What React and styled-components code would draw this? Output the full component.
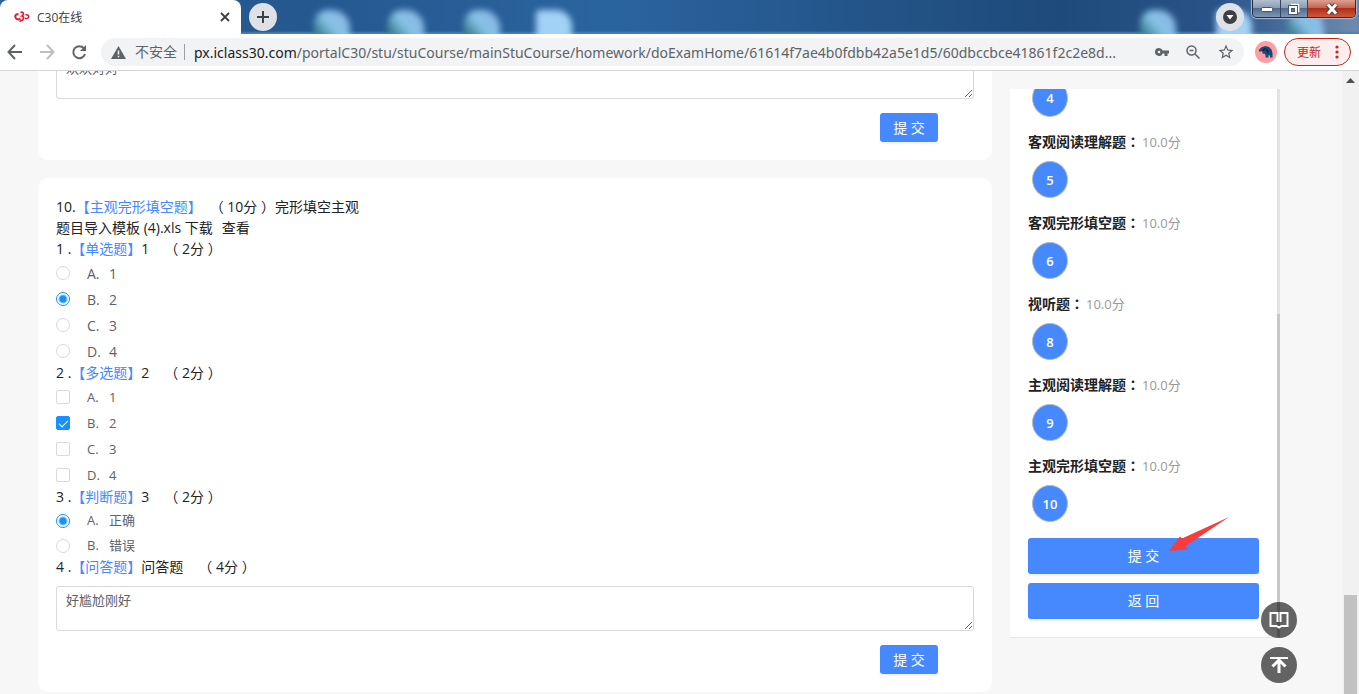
import React, { useState } from 'react';
import styled, { createGlobalStyle, css } from 'styled-components';

const sections = [
  { number: 4 },
  { title: '客观阅读理解题', score: '10.0分', number: 5 },
  { title: '客观完形填空题', score: '10.0分', number: 6 },
  { title: '视听题', score: '10.0分', number: 8 },
  { title: '主观阅读理解题', score: '10.0分', number: 9 },
  { title: '主观完形填空题', score: '10.0分', number: 10 },
];

const numberOptions = [
  { letter: 'A', text: '1' },
  { letter: 'B', text: '2' },
  { letter: 'C', text: '3' },
  { letter: 'D', text: '4' },
];

const judgeOptions = [
  { letter: 'A', text: '正确' },
  { letter: 'B', text: '错误' },
];

function WindowControls() {
  return (
    <Controls>
      <ControlButton type='button' $width={28} aria-label='Minimize'>
        <svg width='14' height='8' viewBox='0 0 14 8'>
          <rect x='1.5' y='2.5' width='11' height='4' rx='1' fill='#fff' stroke='#4a5670' />
        </svg>
      </ControlButton>
      <ControlButton type='button' $width={27} aria-label='Restore'>
        <svg width='14' height='14' viewBox='0 0 14 14' fill='none'>
          <path d='M5 3.5h6v6H9' stroke='#4a5670' strokeWidth='4' />
          <path d='M5 3.5V2.5h6.500v7H9.500' stroke='#fff' strokeWidth='2' />
          <rect x='3' y='5' width='6' height='6' stroke='#4a5670' strokeWidth='4' />
          <rect x='3' y='5' width='6' height='6' stroke='#fff' strokeWidth='2' />
        </svg>
      </ControlButton>
      <ControlButton type='button' $width={47} $close aria-label='Close'>
        <svg width='14' height='12' viewBox='0 0 14 12' fill='none'>
          <path d='M3 1.500L11 10.500M11 1.500L3 10.500' stroke='#5b3440' strokeWidth='5' />
          <path d='M3 1.500L11 10.500M11 1.500L3 10.500' stroke='#fff' strokeWidth='3' />
        </svg>
      </ControlButton>
    </Controls>
  );
}

function TabStrip() {
  return (
    <Strip>
      <Glow $left={314} />
      <Glow $left={388} />
      <Glow $left={464} />
      <Glow $left={536} $square />
      <Glow $left={1140} />
      <Glow $left={1216} $square />
      <Glow $left={1288} />
      <Tab>
        <svg width='16' height='12' viewBox='0 0 16 12' fill='none' stroke='#e8192f' strokeWidth='2'>
          <path d='M4.500 3.500C2 2.500 .8 4.500 1.500 6.500C2.200 8.500 5 9 6.500 7.500' />
          <path d='M6.500 1.500C9.500 0 10.500 3.500 8 5C11 5.500 9.500 10.500 5.500 10' strokeWidth='1.700' />
          <path d='M11.500 4C14.500 3 15.500 5.500 14 7C13 8 11.500 7.500 11 7' strokeWidth='1.500' />
        </svg>
        <TabTitle>C30在线</TabTitle>
        <PlainButton type='button' aria-label='Close tab'>
          <svg width='10' height='10' viewBox='0 0 10 10' stroke='#3c4043' strokeWidth='1.800'>
            <path d='M1 1L9 9M9 1L1 9' />
          </svg>
        </PlainButton>
      </Tab>
      <RoundButton type='button' aria-label='New tab'>
        <svg width='14' height='14' viewBox='0 0 14 14' stroke='#3c4043' strokeWidth='2'>
          <path d='M7 1V13M1 7H13' />
        </svg>
      </RoundButton>
      <StripEnd>
        <RoundButton type='button' aria-label='Search tabs'>
          <svg width='14' height='14' viewBox='0 0 14 14'>
            <circle cx='7' cy='7' r='7' fill='#3c4043' />
            <path d='M3.500 5H10.500L7 9.500Z' fill='#fff' />
          </svg>
        </RoundButton>
        <WindowControls />
      </StripEnd>
    </Strip>
  );
}

function Toolbar() {
  return (
    <Bar>
      <PlainButton type='button' aria-label='Back'>
        <svg width='16' height='16' viewBox='0 0 16 16' fill='none' stroke='#5f6368' strokeWidth='2'>
          <path d='M15 8H2M8 1L1.500 8L8 15' />
        </svg>
      </PlainButton>
      <PlainButton type='button' aria-label='Forward'>
        <svg width='16' height='16' viewBox='0 0 16 16' fill='none' stroke='#bcbec1' strokeWidth='2'>
          <path d='M1 8H14M8 1L14.500 8L8 15' />
        </svg>
      </PlainButton>
      <PlainButton type='button' aria-label='Reload'>
        <svg width='16' height='16' viewBox='0 0 16 16'>
          <path d='M12.800 4.200A6 6 0 1 0 14 10' fill='none' stroke='#5f6368' strokeWidth='2' />
          <path d='M15 1V7H9Z' fill='#5f6368' />
        </svg>
      </PlainButton>
      <AddressBar>
        <svg width='15' height='13' viewBox='0 0 15 13'>
          <path d='M7.500 0L15 13H0Z' fill='#5f6368' />
          <path d='M7.500 4.500V8.500M7.500 9.700V11.300' stroke='#f1f3f4' strokeWidth='1.500' />
        </svg>
        <Insecure>不安全</Insecure>
        <Url>
          <b>px.iclass30.com</b>/portalC30/stu/stuCourse/mainStuCourse/homework/doExamHome/61614f7ae4b0fdbb42a5e1d5/60dbccbce41861f2c2e8d...
        </Url>
        <AddressIcons>
          <PlainButton type='button' aria-label='Passwords'>
            <svg width='14' height='10' viewBox='0 0 14 10' fill='#5f6368'>
              <path fillRule='evenodd' d='M4 1A4 4 0 1 0 7.700 6.500H9.500V9H12.500V6.500H14V3.500H7.700A4 4 0 0 0 4 1ZM4 3.700A1.300 1.300 0 1 1 4 6.300A1.300 1.300 0 0 1 4 3.700Z' />
            </svg>
          </PlainButton>
          <PlainButton type='button' aria-label='Zoom'>
            <svg width='14' height='14' viewBox='0 0 14 14' fill='none' stroke='#5f6368' strokeWidth='1.500'>
              <circle cx='5.500' cy='5.500' r='4.500' />
              <path d='M9 9L13.500 13.500M3.500 5.500H7.500' />
            </svg>
          </PlainButton>
          <PlainButton type='button' aria-label='Bookmark'>
            <svg width='18' height='18' viewBox='0 0 24 24' fill='#5f6368'>
              <path d='M22 9.240l-7.190-.62L12 2 9.190 8.630 2 9.240l5.460 4.730L5.820 21 12 17.270 18.180 21l-1.630-7.030L22 9.240zM12 15.400l-3.760 2.270 1-4.280-3.320-2.880 4.380-.38L12 6.100l1.710 4.040 4.380.38-3.320 2.880 1 4.280L12 15.400z' />
            </svg>
          </PlainButton>
        </AddressIcons>
      </AddressBar>
      <Avatar type='button' aria-label='Profile'>
        <svg width='14' height='14' viewBox='0 0 14 14'>
          <path d='M0 4.500L3 2L6.500 1L10 2L12.500 4.500L13.500 8V12.500H11V10.500L9.500 10V12.500H6.500V9.500L5 8.500L3.500 9V6.500L0 6.500Z' fill='#154a78' />
          <path d='M3.500 5.500L6.500 3.500M7.500 4.500L9 7.500' stroke='#0c1f38' strokeWidth='1.500' />
        </svg>
      </Avatar>
      <UpdateButton type='button'>
        更新
        <svg width='4' height='14' viewBox='0 0 4 14' fill='#d0211c'>
          <circle cx='2' cy='2' r='1.600' />
          <circle cx='2' cy='7' r='1.600' />
          <circle cx='2' cy='12' r='1.600' />
        </svg>
      </UpdateButton>
    </Bar>
  );
}

function Choices({ type, name, options, defaultLetters, small, dense }) {
  const [selected, setSelected] = useState(defaultLetters);

  const toggle = (letter) => {
    if (type === 'radio') {
      setSelected([letter]);
    } else {
      setSelected(selected.includes(letter) ? selected.filter((l) => l !== letter) : [...selected, letter]);
    }
  };

  return (
    <OptionList>
      {options.map(({ letter, text }) => (
        <Option key={letter} $small={small} $dense={dense}>
          <ChoiceInput
            type={type}
            name={name}
            value={letter}
            checked={selected.includes(letter)}
            onChange={() => toggle(letter)}
          />
          <Letter>{letter}.</Letter>
          {text}
        </Option>
      ))}
    </OptionList>
  );
}

function SubQuestion({ number, type, text, score }) {
  return (
    <Line>
      {number} .<Kind>【{type}】</Kind>
      {text}
      <Score>（ {score} ）</Score>
    </Line>
  );
}

function Sidebar() {
  return (
    <Side>
      <SideContent>
        {sections.map(({ title, score, number }) => (
          <Section key={number}>
            {title && (
              <SectionTitle>
                {title}
                <Colon>：</Colon>
                <small>{score}</small>
              </SectionTitle>
            )}
            <NumberButton type='button'>{number}</NumberButton>
          </Section>
        ))}
        <Actions>
          <WideButton type='button'>
            提 交
            <Arrow width='62' height='36' viewBox='0 0 62 36'>
              <path d='M1 34L12 19.500L14 21.500L61 0L17 29.500L20 32.500Z' fill='#fb3a3a' />
            </Arrow>
          </WideButton>
          <WideButton type='button'>返 回</WideButton>
        </Actions>
      </SideContent>
      <SideTrack>
        <SideThumb />
      </SideTrack>
    </Side>
  );
}

export default function App() {
  return (
    <Window>
      <GlobalStyle />
      <TabStrip />
      <Toolbar />
      <Page>
        <Content>
          <Questions>
            <Card>
              <Answer aria-label='第9题答案' defaultValue='欢欢对对' />
              <SubmitButton type='button'>提 交</SubmitButton>
            </Card>
            <Card>
              <Line>
                10.<Kind>【主观完形填空题】</Kind>
                <Score>（ 10分 ）</Score>完形填空主观
              </Line>
              <Line>
                题目导入模板 (4).xls <a href='#download'>下载</a>
                <ViewLink href='#view'>查看</ViewLink>
              </Line>
              <SubQuestion number={1} type='单选题' text='1' score='2分' />
              <Choices type='radio' name='single' options={numberOptions} defaultLetters={['B']} />
              <SubQuestion number={2} type='多选题' text='2' score='2分' />
              <Choices type='checkbox' name='multiple' options={numberOptions} defaultLetters={['B']} small />
              <SubQuestion number={3} type='判断题' text='3' score='2分' />
              <Choices type='radio' name='judge' options={judgeOptions} defaultLetters={['A']} small dense />
              <SubQuestion number={4} type='问答题' text='问答题' score='4分' />
              <Answer aria-label='问答题' defaultValue='好尴尬刚好' />
              <SubmitButton type='button'>提 交</SubmitButton>
            </Card>
          </Questions>
          <Sidebar />
        </Content>
        <ScrollTrack>
          <svg width='9' height='5' viewBox='0 0 9 5'>
            <path d='M4.500 0L9 5H0Z' fill='#505050' />
          </svg>
          <ScrollThumb />
        </ScrollTrack>
        <FloatingTools>
          <FloatingButton type='button' aria-label='Guide'>
            <svg width='20' height='18' viewBox='0 0 20 18' fill='none' stroke='#fff' strokeWidth='2'>
              <path d='M8.500 11V2H1.500V15H7.500L10 16.500L12.500 15H18.500V2H11.500V11' />
            </svg>
          </FloatingButton>
          <FloatingButton type='button' aria-label='Back to top'>
            <svg width='18' height='18' viewBox='0 0 18 18' fill='none' stroke='#fff'>
              <path d='M0 2H18' strokeWidth='2' />
              <path d='M9 3V17M2.500 10.500L9 4L15.500 10.500' strokeWidth='3' />
            </svg>
          </FloatingButton>
        </FloatingTools>
      </Page>
    </Window>
  );
}

const GlobalStyle = createGlobalStyle`
  * {
    box-sizing: border-box;
  }

  body {
    margin: 0;
    color: #222;
    font-family: 'Open Sans', 'Noto Sans CJK SC', sans-serif;
    font-size: 14px;
    line-height: 21px;
  }

  button,
  textarea {
    font-family: inherit;
  }

  svg {
    display: block;
    flex: none;
  }
`;

const Window = styled.div`
  display: flex;
  flex-direction: column;
  height: 100vh;
  overflow: hidden;
`;

/* browser frame */

const Strip = styled.div`
  position: relative;
  display: flex;
  flex: none;
  align-items: flex-start;
  height: 34px;
  overflow: hidden;
  background: linear-gradient(90deg, #2b5c98 0%, #25588f 22%, #2a649f 45%, #235387 65%, #1e4a7b 78%, #2a5489 90%, #6f8bae 100%);
  box-shadow: inset 0 -2px 2px #4f7fb4;
`;

const Glow = styled.span`
  position: absolute;
  top: 10px;
  left: ${(props) => props.$left}px;
  width: 36px;
  height: 34px;
  border-radius: ${(props) => (props.$square ? '4px 16px 0 0' : '14px 18px 0 0')};
  background: ${(props) =>
    props.$square ? '#a2d2f6' : 'linear-gradient(50deg, #3f8294 20%, #86c2e6 50%, #8fb4e6 100%)'};
  filter: blur(3px);
`;

const PlainButton = styled.button`
  display: flex;
  padding: 0;
  border: none;
  background: none;
`;

const Tab = styled.div`
  position: relative;
  display: flex;
  align-items: center;
  width: 241px;
  height: 34px;
  padding: 0 11px 0 14px;
  border-radius: 8px 8px 0 0;
  background: #fff;
`;

const TabTitle = styled.span`
  flex: 1;
  margin-left: 7px;
  color: #3c4043;
  font-size: 12px;
`;

const RoundButton = styled.button`
  position: relative;
  display: flex;
  align-items: center;
  justify-content: center;
  width: 28px;
  height: 28px;
  margin: 3px 8px;
  padding: 0;
  border: none;
  border-radius: 50%;
  background: #dee1e6;
`;

const StripEnd = styled.div`
  display: flex;
  margin-left: auto;
  padding-right: 3px;
`;

const Controls = styled.div`
  position: relative;
  display: flex;
  height: 18px;
  overflow: hidden;
  border: 1px solid #1f2f4c;
  border-top: none;
  border-radius: 0 0 5px 5px;
  box-shadow: 0 0 1px 1px #a9bdd6;
`;

const ControlButton = styled.button`
  display: flex;
  align-items: center;
  justify-content: center;
  width: ${(props) => props.$width}px;
  padding: 0;
  border: none;
  border-right: ${(props) => (props.$close ? 'none' : '1px solid #34435f')};
  background: linear-gradient(#b3bfd0 0%, #8b9db6 45%, #536b8f 50%, #7f96b6 100%);

  ${(props) =>
    props.$close &&
    css`
      background: linear-gradient(#dda08f 0%, #c8634f 45%, #ae2f17 50%, #d1583a 100%);
    `}
`;

const Bar = styled.div`
  display: flex;
  flex: none;
  align-items: center;
  gap: 16px;
  height: 37px;
  padding: 0 8px 0 7px;
  border-bottom: 1px solid #d5d6da;
  background: #fff;
`;

const AddressBar = styled.div`
  display: flex;
  flex: 1;
  align-items: center;
  min-width: 0;
  height: 28px;
  margin-left: -2px;
  padding: 0 9px 0 10px;
  border-radius: 14px;
  background: #f1f3f4;
  color: #5f6368;
`;

const Insecure = styled.span`
  flex: none;
  margin-left: 9px;
  padding-right: 7px;
  border-right: 1px solid #9aa0a6;
  line-height: 16px;
`;

const Url = styled.span`
  flex: 1;
  min-width: 0;
  margin-left: 9px;
  overflow: hidden;
  font-family: 'Noto Sans', sans-serif;
  font-size: 14px;
  text-overflow: ellipsis;
  white-space: nowrap;

  b {
    color: #202124;
    font-weight: 400;
  }
`;

const AddressIcons = styled.div`
  display: flex;
  align-items: center;
  gap: 17px;
  margin-left: 12px;
`;

const Avatar = styled.button`
  display: flex;
  align-items: center;
  justify-content: center;
  width: 22px;
  height: 22px;
  margin: 0 -9px 0 -5px;
  padding: 0;
  border: none;
  border-radius: 50%;
  background: #fd9da3;
`;

const UpdateButton = styled.button`
  display: flex;
  align-items: center;
  justify-content: space-between;
  width: 67px;
  height: 28px;
  padding: 0 11px 0 12px;
  border: 1px solid #c5221f;
  border-radius: 14px;
  background: #fceeed;
  color: #c5221f;
  font-size: 12px;
`;

/* exam page */

const Page = styled.div`
  position: relative;
  display: flex;
  flex: 1;
  min-height: 0;
  background: #f7f7f7;
`;

const Content = styled.main`
  display: flex;
  flex: 1;
  gap: 18px;
  min-width: 0;
  padding: 0 62px 0 38px;
`;

const Questions = styled.div`
  display: flex;
  flex: 1;
  flex-direction: column;
  justify-content: flex-end;
  gap: 18px;
  min-width: 0;
  padding-bottom: 2px;
  overflow: hidden;
`;

const Card = styled.section`
  display: flex;
  flex: none;
  flex-direction: column;
  padding: 18px;
  border-radius: 10px;
  background: #fff;
`;

const Line = styled.div`
  white-space: pre-wrap;

  a {
    color: inherit;
    text-decoration: none;
  }
`;

const Kind = styled.span`
  color: #4689ff;
`;

const Score = styled.span`
  margin-left: 15px;
`;

const ViewLink = styled.a`
  margin-left: 9px;
`;

const OptionList = styled.div`
  display: flex;
  flex-direction: column;
  gap: 4px;
  padding-top: 3px;
`;

const Option = styled.label`
  display: flex;
  align-items: center;
  height: ${(props) => (props.$dense ? 21 : 22)}px;
  color: #606266;
  font-size: ${(props) => (props.$small ? 13 : 14)}px;
`;

const Letter = styled.span`
  width: 22px;
  margin-left: 17px;
`;

const ChoiceInput = styled.input`
  appearance: none;
  width: 14px;
  height: 14px;
  margin: 0;
  border: 1px solid #d9d9d9;
  border-radius: ${(props) => (props.type === 'radio' ? '50%' : '2px')};
  background: #fff;

  &:checked {
    border-color: #1890ff;
  }

  &[type='radio']:checked {
    background: radial-gradient(circle, #1890ff 3px, #fff 5px);
  }

  &[type='checkbox']:checked {
    display: flex;
    justify-content: center;
    background: #1890ff;
  }

  &[type='checkbox']:checked::after {
    width: 4px;
    height: 8px;
    margin-top: 1px;
    border: solid #fff;
    border-width: 0 1px 1px 0;
    content: '';
    transform: rotate(45deg);
  }
`;

const Answer = styled.textarea`
  height: 45px;
  margin: 9px 0 0;
  padding: 3px 9px;
  border: 1px solid #d9d9d9;
  border-radius: 3px;
  color: #606266;
  font-size: 13px;
  line-height: 20px;
  resize: vertical;
`;

const BlueButton = styled.button`
  padding: 0 0 2px;
  border: none;
  border-radius: 3px;
  background: #4689ff;
  box-shadow: 0 2px 2px rgba(0, 0, 0, 0.06);
  color: #fff;
  font-size: 14px;
`;

const SubmitButton = styled(BlueButton)`
  align-self: flex-end;
  width: 58px;
  height: 29px;
  margin: 14px 36px 0 0;
`;

const Side = styled.aside`
  display: flex;
  flex: none;
  width: 270px;
  margin: 18px 0 56px;
  border-bottom: 1px solid #e6e8ee;
  background: #fff;
`;

const SideContent = styled.div`
  display: flex;
  flex: 1;
  flex-direction: column;
  justify-content: flex-end;
  padding: 0 18px;
  overflow: hidden;
`;

const Section = styled.section`
  display: flex;
  flex: none;
  flex-direction: column;
  align-items: flex-start;
  justify-content: flex-end;
  height: 81px;
  padding-bottom: 14px;
`;

const SectionTitle = styled.h3`
  margin: 0;
  font-size: 14px;
  font-weight: 700;

  small {
    margin-left: 2px;
    color: #999;
    font-size: 13px;
    font-weight: 400;
  }
`;

/* the TC face centres the full-width colon in its box */
const Colon = styled.span`
  font-family: 'Noto Sans CJK TC', sans-serif;
`;

const NumberButton = styled.button`
  width: 36px;
  height: 38px;
  margin: 8px 4px 0;
  padding: 0;
  border: 1px solid #b4b8c0;
  border-radius: 50%;
  background: #4689ff;
  color: #fff;
  font-size: 13px;
  font-weight: 600;
`;

const Actions = styled.div`
  display: flex;
  flex: none;
  flex-direction: column;
  gap: 9px;
  padding: 2px 0 18px;
`;

const WideButton = styled(BlueButton)`
  position: relative;
  height: 36px;
`;

const Arrow = styled.svg`
  position: absolute;
  right: 29px;
  bottom: 21px;
`;

const SideTrack = styled.div`
  display: flex;
  align-items: flex-end;
  width: 3px;
  background: #e4e4e4;
`;

const SideThumb = styled.div`
  width: 3px;
  height: 59%;
  background: #c8c8c8;
`;

const ScrollTrack = styled.div`
  display: flex;
  flex: none;
  flex-direction: column;
  align-items: center;
  justify-content: space-between;
  width: 17px;
  padding-top: 7px;
  background: #f1f1f1;
`;

const ScrollThumb = styled.div`
  width: 13px;
  height: 16%;
  background: #c1c1c1;
`;

const FloatingTools = styled.div`
  position: absolute;
  right: 62px;
  bottom: 11px;
  display: flex;
  flex-direction: column;
  gap: 9px;
`;

const FloatingButton = styled.button`
  display: flex;
  align-items: center;
  justify-content: center;
  width: 36px;
  height: 36px;
  padding: 0;
  border: none;
  border-radius: 50%;
  background: rgba(0, 0, 0, 0.6);
`;
